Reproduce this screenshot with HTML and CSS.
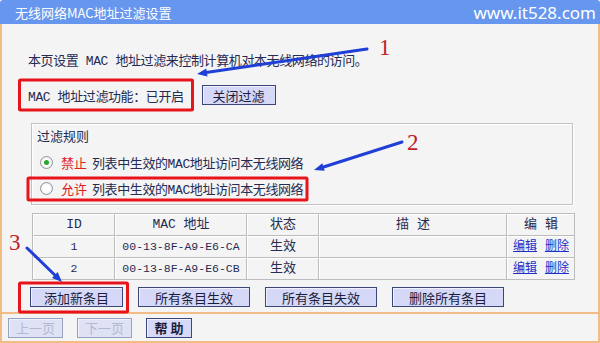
FILE: index.html
```html
<!DOCTYPE html>
<html>
<head>
  <meta charset="utf-8">
  <title>无线网络MAC地址过滤设置</title>
  <link rel="stylesheet" href="styles.css">
</head>
<body>
  <div class="page">
    <div class="titlebar">
      <span class="title">无线网络MAC地址过滤设置</span>
      <span class="site">www.it528.com</span>
    </div>

    <div class="main">
      <p class="intro">本页设置 MAC 地址过滤来控制计算机对本无线网络的访问。</p>

      <div class="status">
        <span>MAC 地址过滤功能：已开启</span>
        <button class="btn">关闭过滤</button>
      </div>

      <div class="rules">
        <div class="rules-title">过滤规则</div>
        <div class="rule"><span class="radio on"></span><span class="red">禁止</span><span class="tight">列表中生效的MAC地址访问本无线网络</span></div>
        <div class="rule"><span class="radio"></span><span class="red">允许</span><span class="tight">列表中生效的MAC地址访问本无线网络</span></div>
      </div>

      <table class="list">
        <tr>
          <th class="c-id">ID</th>
          <th class="c-mac">MAC 地址</th>
          <th class="c-st">状态</th>
          <th class="c-desc">描 述</th>
          <th class="c-ed">编 辑</th>
        </tr>
        <tr>
          <td class="mono">1</td>
          <td class="mono">00-13-8F-A9-E6-CA</td>
          <td>生效</td>
          <td></td>
          <td><a href="#">编辑</a> <a href="#">删除</a></td>
        </tr>
        <tr>
          <td class="mono">2</td>
          <td class="mono">00-13-8F-A9-E6-CB</td>
          <td>生效</td>
          <td></td>
          <td><a href="#">编辑</a> <a href="#">删除</a></td>
        </tr>
      </table>

      <div class="actions">
        <button class="btn w-add">添加新条目</button>
        <button class="btn w-all">所有条目生效</button>
        <button class="btn w-all">所有条目失效</button>
        <button class="btn w-all">删除所有条目</button>
      </div>
    </div>

    <div class="foot">
      <button class="btn off w-page">上一页</button>
      <button class="btn off w-page">下一页</button>
      <button class="btn w-help">帮 助</button>
    </div>

    <!-- annotations drawn over the page -->
    <svg class="marks" width="600" height="343" viewBox="0 0 600 343">
      <g fill="none" stroke="#e8141c" stroke-width="3">
        <rect x="19.5" y="80" width="173" height="30" rx="1"/>
        <rect x="28" y="178" width="279" height="22" rx="1"/>
        <rect x="19.5" y="283" width="108" height="29" rx="1"/>
      </g>
      <g stroke="#1f3fd6" stroke-width="3" stroke-linecap="round">
        <line x1="367" y1="49" x2="206" y2="72.5"/>
        <line x1="402" y1="142" x2="323.5" y2="167"/>
        <line x1="27" y1="248" x2="54.8" y2="275"/>
      </g>
      <g fill="#1f3fd6">
        <polygon points="197,74 207.5,76.5 206.3,68.6"/>
        <polygon points="314,170 324.7,170.8 322.3,163.2"/>
        <polygon points="62,282 52,277.9 57.6,272.1"/>
      </g>
      <g class="num">
        <text x="379" y="55">1</text>
        <text x="407" y="150">2</text>
        <text x="9" y="250">3</text>
      </g>
    </svg>
  </div>
</body>
</html>
```

FILE: styles.css
```css
body {
  margin: 0;
  font-family: "Liberation Mono", "Noto Sans CJK SC", monospace;
  font-size: 13px;
  color: #262b52;
  background: #fff;
}

.page {
  position: relative;
  width: 600px;
  height: 343px;
}

.titlebar {
  height: 24px;
  background: #6696ee;
  border-radius: 3px 3px 0 0;
  display: flex;
  align-items: center;
  justify-content: space-between;
  padding: 0 4px 0 15px;
  color: #fff;
}
.title { font-family: "Noto Sans CJK SC", sans-serif; font-size: 13px; }
.site { font-family: "Noto Sans", sans-serif; font-size: 17px; }

.main {
  background: #f4f4f4;
  border: 2px solid #f2bd84;
  border-top: 0;
  padding: 0 25px 0 26px;
  box-sizing: border-box;
  height: 290px;
}

.intro {
  margin: 0;
  padding-top: 29px;
  line-height: 18px;
  letter-spacing: -0.4px;
}

.status {
  display: flex;
  align-items: center;
  gap: 18px;
  margin-top: 14px;
  height: 20px;
  letter-spacing: -0.4px;
}

.btn {
  font-family: "Noto Sans CJK SC", sans-serif;
  font-size: 13px;
  color: #1b1d3e;
  background: #d5d8f6;
  border: 1px solid #3a4677;
  height: 20px;
  padding: 0;
  line-height: 17px;
  letter-spacing: 0;
  box-shadow: inset 1px 1px 0 #f0f1fd;
}
.status .btn { width: 74px; }
.btn.off {
  color: #b4b8d2;
  border-color: #98a0c0;
  background: #dfe2f4;
}

.rules {
  margin: 18px 0 0 3px;
  height: 82px;
  border: 1px solid #c2c2c2;
  box-shadow: inset 1px 1px 0 #fff, 1px 1px 0 #fff;
  box-sizing: border-box;
  padding: 5px 0 0 5px;
}
.rules-title { line-height: 17px; }
.rule {
  display: flex;
  align-items: center;
  height: 18px;
  margin-top: 8px;
  padding-left: 3px;
}
.rules-title + .rule { margin-top: 7px; }

.radio {
  width: 11px;
  height: 11px;
  border: 1px solid #8c929c;
  border-radius: 50%;
  background: radial-gradient(circle, #fff 40%, #dfe2e8);
  margin-right: 8px;
  position: relative;
}
.radio.on::after {
  content: "";
  position: absolute;
  left: 3px;
  top: 3px;
  width: 5px;
  height: 5px;
  border-radius: 50%;
  background: #2aa52a;
}
.red { color: #e0201c; margin-right: 5px; }
.tight { letter-spacing: -0.4px; }

.list {
  margin: 8px 0 0 4px;
  width: 543px;
  border-collapse: separate;
  border-spacing: 0;
  border: 1px solid #bcbcbc;
  table-layout: fixed;
}
.list th, .list td {
  height: 20px;
  padding: 0;
  text-align: center;
  font-weight: normal;
  border-right: 1px solid #bcbcbc;
  border-bottom: 1px solid #bcbcbc;
  border-left: 1px solid #fff;
  border-top: 1px solid #fff;
  line-height: 18px;
}
.list tr:last-child td { border-bottom: 0; }
.list th:last-child, .list td:last-child { border-right: 0; }
.c-id { width: 80px; }
.c-mac { width: 130px; }
.c-st { width: 70px; }
.c-ed { width: 66px; }
.mono { font-size: 11.5px; }
.list a {
  color: #1c2fc8;
  font-size: 12px;
}

.actions {
  display: flex;
  gap: 15px;
  margin-top: 7px;
  padding-left: 2px;
}
.w-add { width: 93px; }
.w-all { width: 112px; }

.foot {
  height: 29px;
  background: #f4f4f4;
  border: 2px solid #f2bd84;
  border-top: 0;
  box-sizing: border-box;
  display: flex;
  align-items: center;
  gap: 14px;
  padding-left: 6px;
}
.w-page { width: 55px; }
.w-help { width: 46px; font-weight: bold; }

.marks {
  position: absolute;
  left: 0;
  top: 0;
  pointer-events: none;
}
.num text {
  font-family: "Liberation Serif", serif;
  font-size: 23px;
  fill: #c0202e;
}
```
